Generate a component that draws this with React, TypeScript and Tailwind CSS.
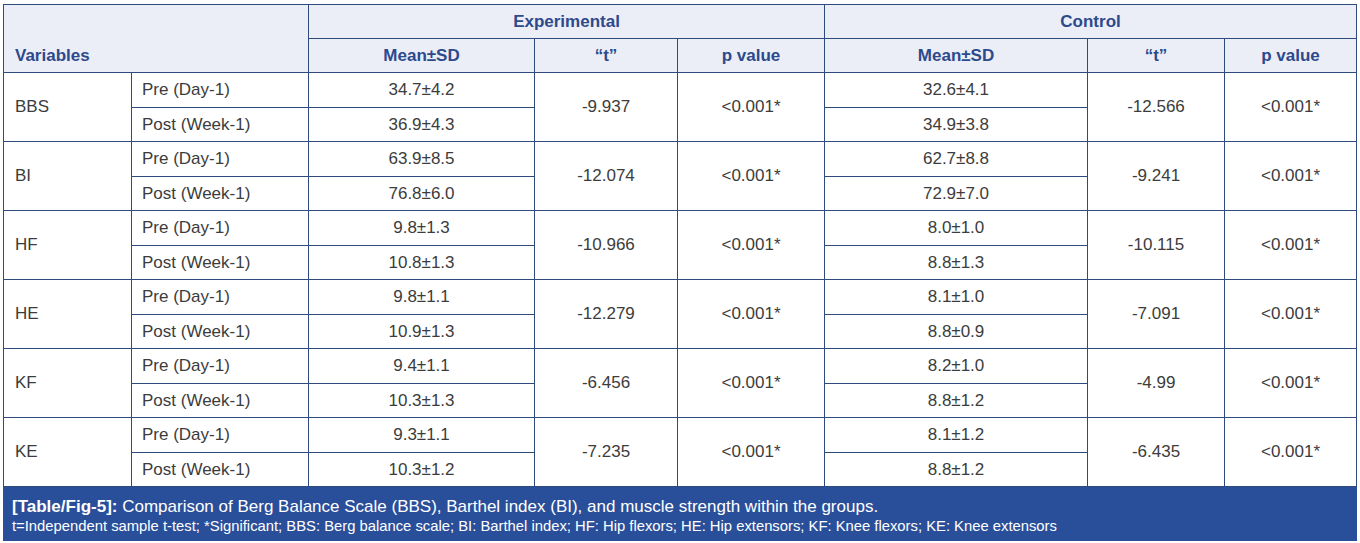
const rows = [
  { v: 'BBS', e: ['34.7±4.2', '36.9±4.3'], et: '-9.937', ep: '<0.001*', c: ['32.6±4.1', '34.9±3.8'], ct: '-12.566', cp: '<0.001*' },
  { v: 'BI', e: ['63.9±8.5', '76.8±6.0'], et: '-12.074', ep: '<0.001*', c: ['62.7±8.8', '72.9±7.0'], ct: '-9.241', cp: '<0.001*' },
  { v: 'HF', e: ['9.8±1.3', '10.8±1.3'], et: '-10.966', ep: '<0.001*', c: ['8.0±1.0', '8.8±1.3'], ct: '-10.115', cp: '<0.001*' },
  { v: 'HE', e: ['9.8±1.1', '10.9±1.3'], et: '-12.279', ep: '<0.001*', c: ['8.1±1.0', '8.8±0.9'], ct: '-7.091', cp: '<0.001*' },
  { v: 'KF', e: ['9.4±1.1', '10.3±1.3'], et: '-6.456', ep: '<0.001*', c: ['8.2±1.0', '8.8±1.2'], ct: '-4.99', cp: '<0.001*' },
  { v: 'KE', e: ['9.3±1.1', '10.3±1.2'], et: '-7.235', ep: '<0.001*', c: ['8.1±1.2', '8.8±1.2'], ct: '-6.435', cp: '<0.001*' },
];

const cell = 'border border-[#2f4b7c] p-0';

export default function App() {
  return (
    <div className="bg-white w-[1360px] h-[543px] pt-[4px] pl-[3px] font-['Liberation_Sans',Arial,sans-serif]">
      <table className="table-fixed border-collapse w-[1353px] text-[17px] text-[#3c3c3c]">
        <colgroup>
          <col className="w-[128px]" />
          <col className="w-[177px]" />
          <col className="w-[226px]" />
          <col className="w-[143px]" />
          <col className="w-[147px]" />
          <col className="w-[263px]" />
          <col className="w-[137px]" />
          <col className="w-[132px]" />
        </colgroup>
        <thead className="bg-[#eceef7] text-[#2c4a8c] font-bold">
          <tr className="h-[34px]">
            <th colSpan={2} rowSpan={2} className={`${cell} text-left align-bottom pl-[11px] pb-[4px]`}>
              Variables
            </th>
            <th colSpan={3} className={`${cell} text-center`}>Experimental</th>
            <th colSpan={3} className={`${cell} text-center`}>Control</th>
          </tr>
          <tr className="h-[34px]">
            <th className={`${cell} text-center`}>Mean±SD</th>
            <th className={`${cell} text-center`}>“t”</th>
            <th className={`${cell} text-center`}>p value</th>
            <th className={`${cell} text-center`}>Mean±SD</th>
            <th className={`${cell} text-center`}>“t”</th>
            <th className={`${cell} text-center`}>p value</th>
          </tr>
        </thead>
        <tbody>
          {rows.map((r) => (
            <>
              <tr key={r.v + 'a'} className="h-[35px]">
                <td rowSpan={2} className={`${cell} pl-[11px]`}>{r.v}</td>
                <td className={`${cell} pl-[10px]`}>Pre (Day-1)</td>
                <td className={`${cell} text-center`}>{r.e[0]}</td>
                <td rowSpan={2} className={`${cell} text-center`}>{r.et}</td>
                <td rowSpan={2} className={`${cell} text-center`}>{r.ep}</td>
                <td className={`${cell} text-center`}>{r.c[0]}</td>
                <td rowSpan={2} className={`${cell} text-center`}>{r.ct}</td>
                <td rowSpan={2} className={`${cell} text-center`}>{r.cp}</td>
              </tr>
              <tr key={r.v + 'b'} className="h-[34px]">
                <td className={`${cell} pl-[10px]`}>Post (Week-1)</td>
                <td className={`${cell} text-center`}>{r.e[1]}</td>
                <td className={`${cell} text-center`}>{r.c[1]}</td>
              </tr>
            </>
          ))}
        </tbody>
      </table>
      <div className="w-[1354px] h-[54px] bg-[#2a4f9a] text-white pl-[9px] pt-[10px]">
        <p className="text-[17px] leading-[20px]">
          <span className="font-bold">[Table/Fig-5]:</span> Comparison of Berg Balance Scale (BBS), Barthel index (BI), and muscle strength within the groups.
        </p>
        <p className="text-[14.8px] leading-[19px]">
          t=Independent sample t-test; *Significant; BBS: Berg balance scale; BI: Barthel index; HF: Hip flexors; HE: Hip extensors; KF: Knee flexors; KE: Knee extensors
        </p>
      </div>
    </div>
  );
}
